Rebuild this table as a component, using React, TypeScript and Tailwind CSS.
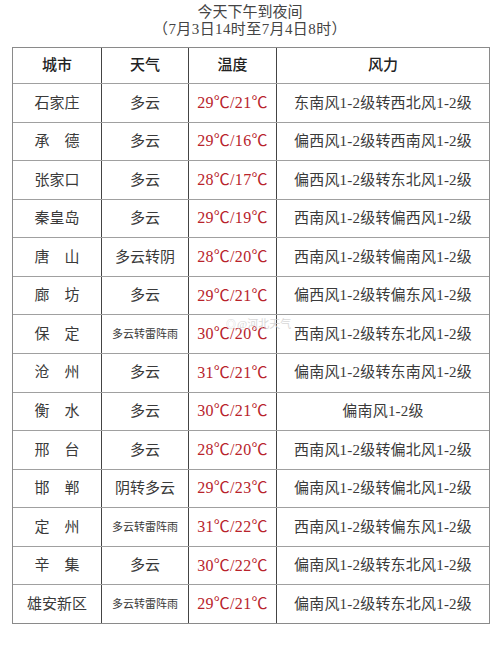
import React from "react";

type Row = { city: string; weather: string; small?: boolean; temp: string; wind: string };

const rows: Row[] = [
  { city: "石家庄", weather: "多云", temp: "29℃/21℃", wind: "东南风1-2级转西北风1-2级" },
  { city: "承　德", weather: "多云", temp: "29℃/16℃", wind: "偏西风1-2级转西南风1-2级" },
  { city: "张家口", weather: "多云", temp: "28℃/17℃", wind: "偏西风1-2级转东北风1-2级" },
  { city: "秦皇岛", weather: "多云", temp: "29℃/19℃", wind: "西南风1-2级转偏西风1-2级" },
  { city: "唐　山", weather: "多云转阴", temp: "28℃/20℃", wind: "西南风1-2级转偏南风1-2级" },
  { city: "廊　坊", weather: "多云", temp: "29℃/21℃", wind: "偏西风1-2级转偏东风1-2级" },
  { city: "保　定", weather: "多云转雷阵雨", small: true, temp: "30℃/20℃", wind: "西南风1-2级转东北风1-2级" },
  { city: "沧　州", weather: "多云", temp: "31℃/21℃", wind: "偏南风1-2级转东南风1-2级" },
  { city: "衡　水", weather: "多云", temp: "30℃/21℃", wind: "偏南风1-2级" },
  { city: "邢　台", weather: "多云", temp: "28℃/20℃", wind: "西南风1-2级转偏北风1-2级" },
  { city: "邯　郸", weather: "阴转多云", temp: "29℃/23℃", wind: "偏南风1-2级转偏北风1-2级" },
  { city: "定　州", weather: "多云转雷阵雨", small: true, temp: "31℃/22℃", wind: "西南风1-2级转偏东风1-2级" },
  { city: "辛　集", weather: "多云", temp: "30℃/22℃", wind: "偏南风1-2级转东北风1-2级" },
  { city: "雄安新区", weather: "多云转雷阵雨", small: true, temp: "29℃/21℃", wind: "偏南风1-2级转东北风1-2级" },
];

const font = { fontFamily: '"Liberation Serif", "Noto Sans CJK SC", serif' };

export default function App() {
  return (
    <div className="w-[500px] h-[646px] bg-white relative text-[#3a3a3a]" style={font}>
      <div className="pt-[4px] text-center text-[15px] leading-[17px] text-[#444]">
        <div>今天下午到夜间</div>
        <div className="tracking-[0.4px]">（7月3日14时至7月4日8时）</div>
      </div>
      <div className="mt-[9px] ml-[12px] w-[478px] border border-[#8a8a8a]">
        <div className="grid grid-cols-[88px_87px_88px_1fr] h-[35px] text-[15px] font-medium text-[#222]">
          <div className="flex items-center justify-center">城市</div>
          <div className="flex items-center justify-center border-l border-[#444]">天气</div>
          <div className="flex items-center justify-center border-l border-[#444]">温度</div>
          <div className="flex items-center justify-center border-l border-[#444]">风力</div>
        </div>
        {rows.map((r, i) => (
          <div
            key={i}
            className="grid grid-cols-[88px_87px_88px_1fr] h-[38.57px] border-t border-[#a0a0a0] text-[15px]"
          >
            <div className="flex items-center justify-center">{r.city}</div>
            <div
              className={
                "flex items-center justify-center border-l border-[#444] " +
                (r.small ? "text-[11px]" : "text-[15px]")
              }
            >
              {r.weather}
            </div>
            <div className="flex items-center justify-center border-l border-[#444] text-[#b8232b] text-[16px] tracking-[0.3px]">
              {r.temp}
            </div>
            <div className="flex items-center justify-center border-l border-[#444] tracking-[0.2px]">{r.wind}</div>
          </div>
        ))}
      </div>
      <div className="absolute left-[226px] top-[316px] text-[11px] text-[#cfcfcf] opacity-80 flex items-center gap-[1px]">
        <span className="text-[10px]">◎</span>
        <span>@河北天气</span>
      </div>
    </div>
  );
}
